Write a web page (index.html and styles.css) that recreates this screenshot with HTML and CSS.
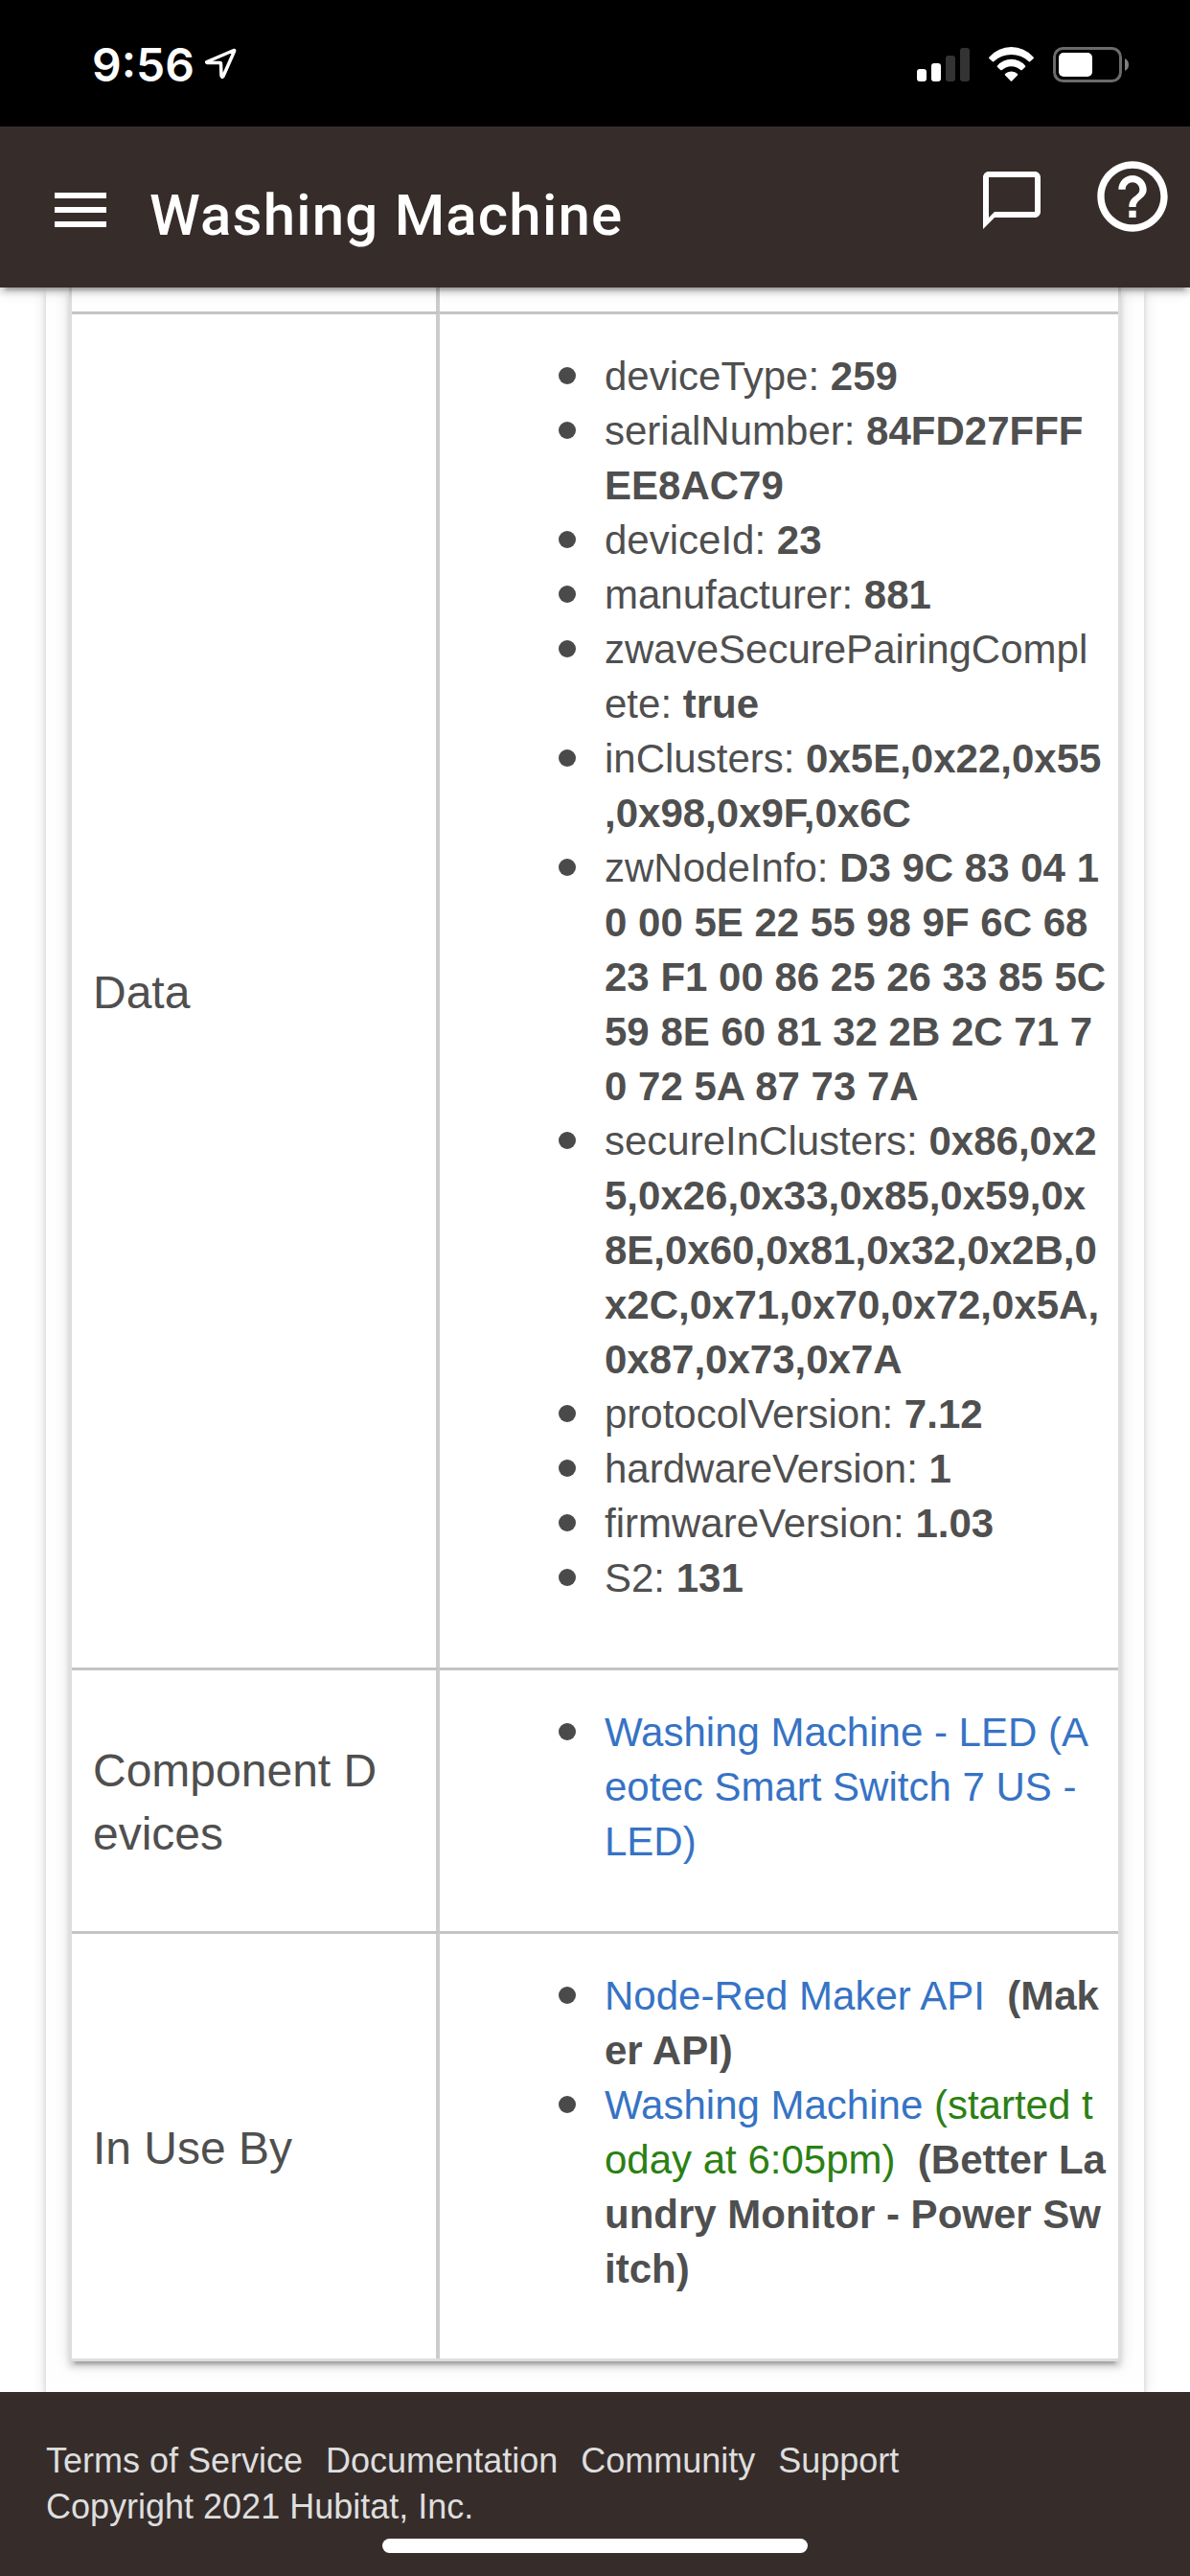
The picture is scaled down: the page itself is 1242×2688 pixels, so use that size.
FILE: index.html
```html
<!DOCTYPE html>
<html lang="en">
<head>
    <meta charset="UTF-8">
    <meta name="viewport" content="width=device-width, initial-scale=1.0">
    <title>Washing Machine</title>
    <link rel="stylesheet" href="styles.css">
</head>
<body>
    <div class="status-bar">
        <div class="status-left">
            <span class="time">9:56</span>
            <svg class="location" width="36" height="36" viewBox="0 0 36 36"><path d="M4 16.500 L32 4.500 Q33 4 32.500 5.500 L21 31.500 Q19.500 33.500 19 31 L18.500 18.500 Q18.500 17.500 17.500 17.500 L4.500 17.500 Q3 17 4 16.500 Z" fill="none" stroke="#fff" stroke-width="3.500" stroke-linejoin="round"/></svg>
        </div>
        <div class="status-right">
            <svg width="56" height="38" viewBox="0 0 56 38">
                <rect x="0" y="23" width="10" height="13" rx="3" fill="#fff"/>
                <rect x="15" y="17" width="10" height="19" rx="3" fill="#fff"/>
                <rect x="30" y="9" width="10" height="27" rx="3" fill="#333"/>
                <rect x="45" y="1" width="10" height="35" rx="3" fill="#333"/>
            </svg>
            <svg width="50" height="38" viewBox="0 0 50 38" fill="#fff">
                <path d="M1.500 10.500 Q0.500 11.500 1.500 12.200 L5 15.300 Q5.800 15.800 6.500 15 Q14 8 24.500 8 Q35 8 42.500 15 Q43.200 15.800 44 15.300 L47.500 12.200 Q48.500 11.500 47.500 10.500 Q38 0 24.500 0 Q11 0 1.500 10.500 Z"/>
                <path d="M10 19.500 Q9.200 20.200 10 21 L13.200 24 Q14 24.600 14.800 24 Q19 20.200 24.500 20.200 Q30 20.200 34.200 24 Q35 24.600 35.800 24 L39 21 Q39.800 20.200 39 19.500 Q33 12.800 24.500 12.800 Q16 12.800 10 19.500 Z"/>
                <path d="M18 28 Q17.500 28.800 18 29.500 L23.800 35.500 Q24.500 36.200 25.200 35.500 L31 29.500 Q31.500 28.800 31 28 Q28.500 25.500 24.500 25.500 Q20.500 25.500 18 28 Z"/>
            </svg>
            <svg width="80" height="38" viewBox="0 0 80 38">
                <rect x="1.500" y="1.500" width="69" height="34" rx="9" fill="none" stroke="#6b6b6b" stroke-width="3"/>
                <rect x="6" y="6" width="35" height="25" rx="5" fill="#fff"/>
                <path d="M75 12 Q79 14 79 18.500 Q79 23 75 25 Z" fill="#808080"/>
            </svg>
        </div>
    </div>

    <header class="header">
        <div class="header-left">
            <button type="button" class="icon-button" aria-label="Menu">
                <svg width="72" height="72" viewBox="0 0 24 24" fill="#fff"><path d="M3 18h18v-2H3v2zm0-5h18v-2H3v2zm0-7v2h18V6H3z"/></svg>
            </button>
            <h1>Washing Machine</h1>
        </div>
        <div class="header-right">
            <button type="button" class="icon-button chat" aria-label="Messages">
                <svg width="72" height="72" viewBox="0 0 24 24" fill="#fff"><path d="M20 2H4c-1.100 0-2 .9-2 2v18l4-4h14c1.100 0 2-.9 2-2V4c0-1.100-.9-2-2-2zm0 14H6l-2 2V4h16v12z"/></svg>
            </button>
            <button type="button" class="icon-button" aria-label="Help">
                <svg width="88" height="88" viewBox="0 0 24 24" fill="#fff"><path d="M11 18h2v-2h-2v2zm1-16C6.480 2 2 6.480 2 12s4.480 10 10 10 10-4.480 10-10S17.520 2 12 2zm0 18c-4.410 0-8-3.590-8-8s3.590-8 8-8 8 3.590 8 8-3.590 8-8 8zm0-14c-2.210 0-4 1.790-4 4h2c0-1.100.9-2 2-2s2 .9 2 2c0 2-3 1.750-3 5h2c0-2.250 3-2.500 3-5 0-2.210-1.790-4-4-4z"/></svg>
            </button>
        </div>
    </header>

    <main>
        <div class="card">
            <table class="details">
                <tbody>
                    <tr class="previous">
                        <th></th>
                        <td></td>
                    </tr>
                    <tr>
                        <th scope="row">Data</th>
                        <td>
                            <ul>
                                <li>deviceType: <b>259</b></li>
                                <li>serialNumber: <b>84FD27FFF<br>EE8AC79</b></li>
                                <li>deviceId: <b>23</b></li>
                                <li>manufacturer: <b>881</b></li>
                                <li>zwaveSecurePairingCompl<br>ete: <b>true</b></li>
                                <li>inClusters: <b>0x5E,0x22,0x55<br>,0x98,0x9F,0x6C</b></li>
                                <li>zwNodeInfo: <b>D3 9C 83 04 10 00 5E 22 55 98 9F 6C 68 23 F1 00 86 25 26 33 85 5C 59 8E 60 81 32 2B 2C 71 70 72 5A 87 73 7A</b></li>
                                <li>secureInClusters: <b>0x86,0x2<br>5,0x26,0x33,0x85,0x59,0x<br>8E,0x60,0x81,0x32,0x2B,0<br>x2C,0x71,0x70,0x72,0x5A,<br>0x87,0x73,0x7A</b></li>
                                <li>protocolVersion: <b>7.12</b></li>
                                <li>hardwareVersion: <b>1</b></li>
                                <li>firmwareVersion: <b>1.03</b></li>
                                <li>S2: <b>131</b></li>
                            </ul>
                        </td>
                    </tr>
                    <tr>
                        <th scope="row">Component D<br>evices</th>
                        <td>
                            <ul>
                                <li><a href="#">Washing Machine - LED (A<br>eotec Smart Switch 7 US -<br>LED)</a></li>
                            </ul>
                        </td>
                    </tr>
                    <tr>
                        <th scope="row">In Use By</th>
                        <td>
                            <ul>
                                <li><a href="#">Node-Red Maker API</a>&nbsp; <b>(Mak<br>er API)</b></li>
                                <li><a href="#">Washing Machine <span class="started">(started t<br>oday at 6:05pm)</span></a>&nbsp; <b>(Better La<br>undry Monitor - Power Sw<br>itch)</b></li>
                            </ul>
                        </td>
                    </tr>
                </tbody>
            </table>
        </div>
    </main>

    <footer>
        <nav>
            <a href="#">Terms of Service</a>
            <a href="#">Documentation</a>
            <a href="#">Community</a>
            <a href="#">Support</a>
        </nav>
        <div>Copyright 2021 Hubitat, Inc.</div>
        <div class="home-indicator"></div>
    </footer>
</body>
</html>
```
FILE: styles.css
```css
* {
    box-sizing: border-box;
}
body {
    margin: 0;
    min-height: 100vh;
    display: flex;
    flex-direction: column;
    font-family: "Liberation Sans", Arial, sans-serif;
    color: #4f4f4f;
    background: #fff;
}
svg {
    display: block;
}
.status-bar {
    display: flex;
    justify-content: space-between;
    height: 132px;
    padding: 0 63px 0 96px;
    background: #000;
    color: #fff;
}
.status-left {
    display: flex;
    gap: 9px;
    padding-top: 38px;
}
.time {
    font-family: Inter, sans-serif;
    font-size: 48px;
    font-weight: 600;
    line-height: 60px;
}
.location {
    margin-top: 10px;
}
.status-right {
    display: flex;
    gap: 18px;
    padding-top: 49px;
}
.header {
    display: flex;
    justify-content: space-between;
    align-items: flex-start;
    position: relative;
    z-index: 1;
    height: 168px;
    padding: 0 16px 0 48px;
    background: #362d2b;
    color: #fff;
    box-shadow: 0 6px 6px rgba(0, 0, 0, 0.14), 0 9px 3px -6px rgba(0, 0, 0, 0.2), 0 3px 15px rgba(0, 0, 0, 0.12);
}
.header-left {
    display: flex;
    gap: 36px;
    padding-top: 51px;
}
.header-right {
    display: flex;
    gap: 46px;
    padding-top: 29px;
}
.icon-button {
    align-self: flex-start;
    padding: 0;
    border: none;
    background: none;
    cursor: pointer;
}
.chat {
    margin-top: 12px;
}
h1 {
    margin: 0;
    font-family: Roboto, sans-serif;
    font-size: 60px;
    font-weight: 500;
    line-height: 84px;
    letter-spacing: 0.02em;
}
main {
    flex: 1;
    padding: 0 48px;
}
.card {
    height: 100%;
    padding: 0 24px 32px;
    background: #fefefe;
    box-shadow: 0 6px 6px rgba(0, 0, 0, 0.14), 0 9px 3px -6px rgba(0, 0, 0, 0.2), 0 3px 15px rgba(0, 0, 0, 0.12);
}
.details {
    width: 100%;
    table-layout: fixed;
    border-collapse: separate;
    border-spacing: 0;
    border: 3px solid #dedede;
    border-top: none;
    background: #fff;
    box-shadow: 0 6px 6px rgba(0, 0, 0, 0.14), 0 9px 3px -6px rgba(0, 0, 0, 0.2), 0 3px 15px rgba(0, 0, 0, 0.12);
    word-break: break-all;
}
.details th,
.details td {
    border-top: 3px solid #c4c4c4;
    vertical-align: middle;
    text-align: left;
}
.details th {
    width: 384px;
    padding: 4px 24px 0 22px;
    border-right: 4px solid #ccc;
    font-size: 48px;
    font-weight: normal;
    line-height: 66px;
}
.details td {
    padding: 36px 8px 65px 22px;
    font-size: 42px;
    line-height: 57px;
}
.details .previous th,
.details .previous td {
    height: 25px;
    padding: 0;
    border-top: none;
}
ul {
    margin: 0;
    padding: 0 0 0 150px;
    list-style: none;
}
li {
    position: relative;
}
li::before {
    content: "";
    position: absolute;
    top: 19px;
    left: -48px;
    width: 18px;
    height: 18px;
    border-radius: 50%;
    background: #4a4a4a;
}
a {
    color: #3673c5;
    text-decoration: none;
}
.started {
    color: #2b8013;
}
footer {
    position: relative;
    padding: 48px 48px 24px;
    background: #362d2b;
    color: #dedede;
    font-size: 36px;
    line-height: 48px;
}
footer nav {
    display: flex;
    gap: 24px;
}
footer a {
    color: #dedede;
}
.home-indicator {
    width: 444px;
    height: 15px;
    margin: 9px auto 0;
    border-radius: 8px;
    background: #fff;
}
```
